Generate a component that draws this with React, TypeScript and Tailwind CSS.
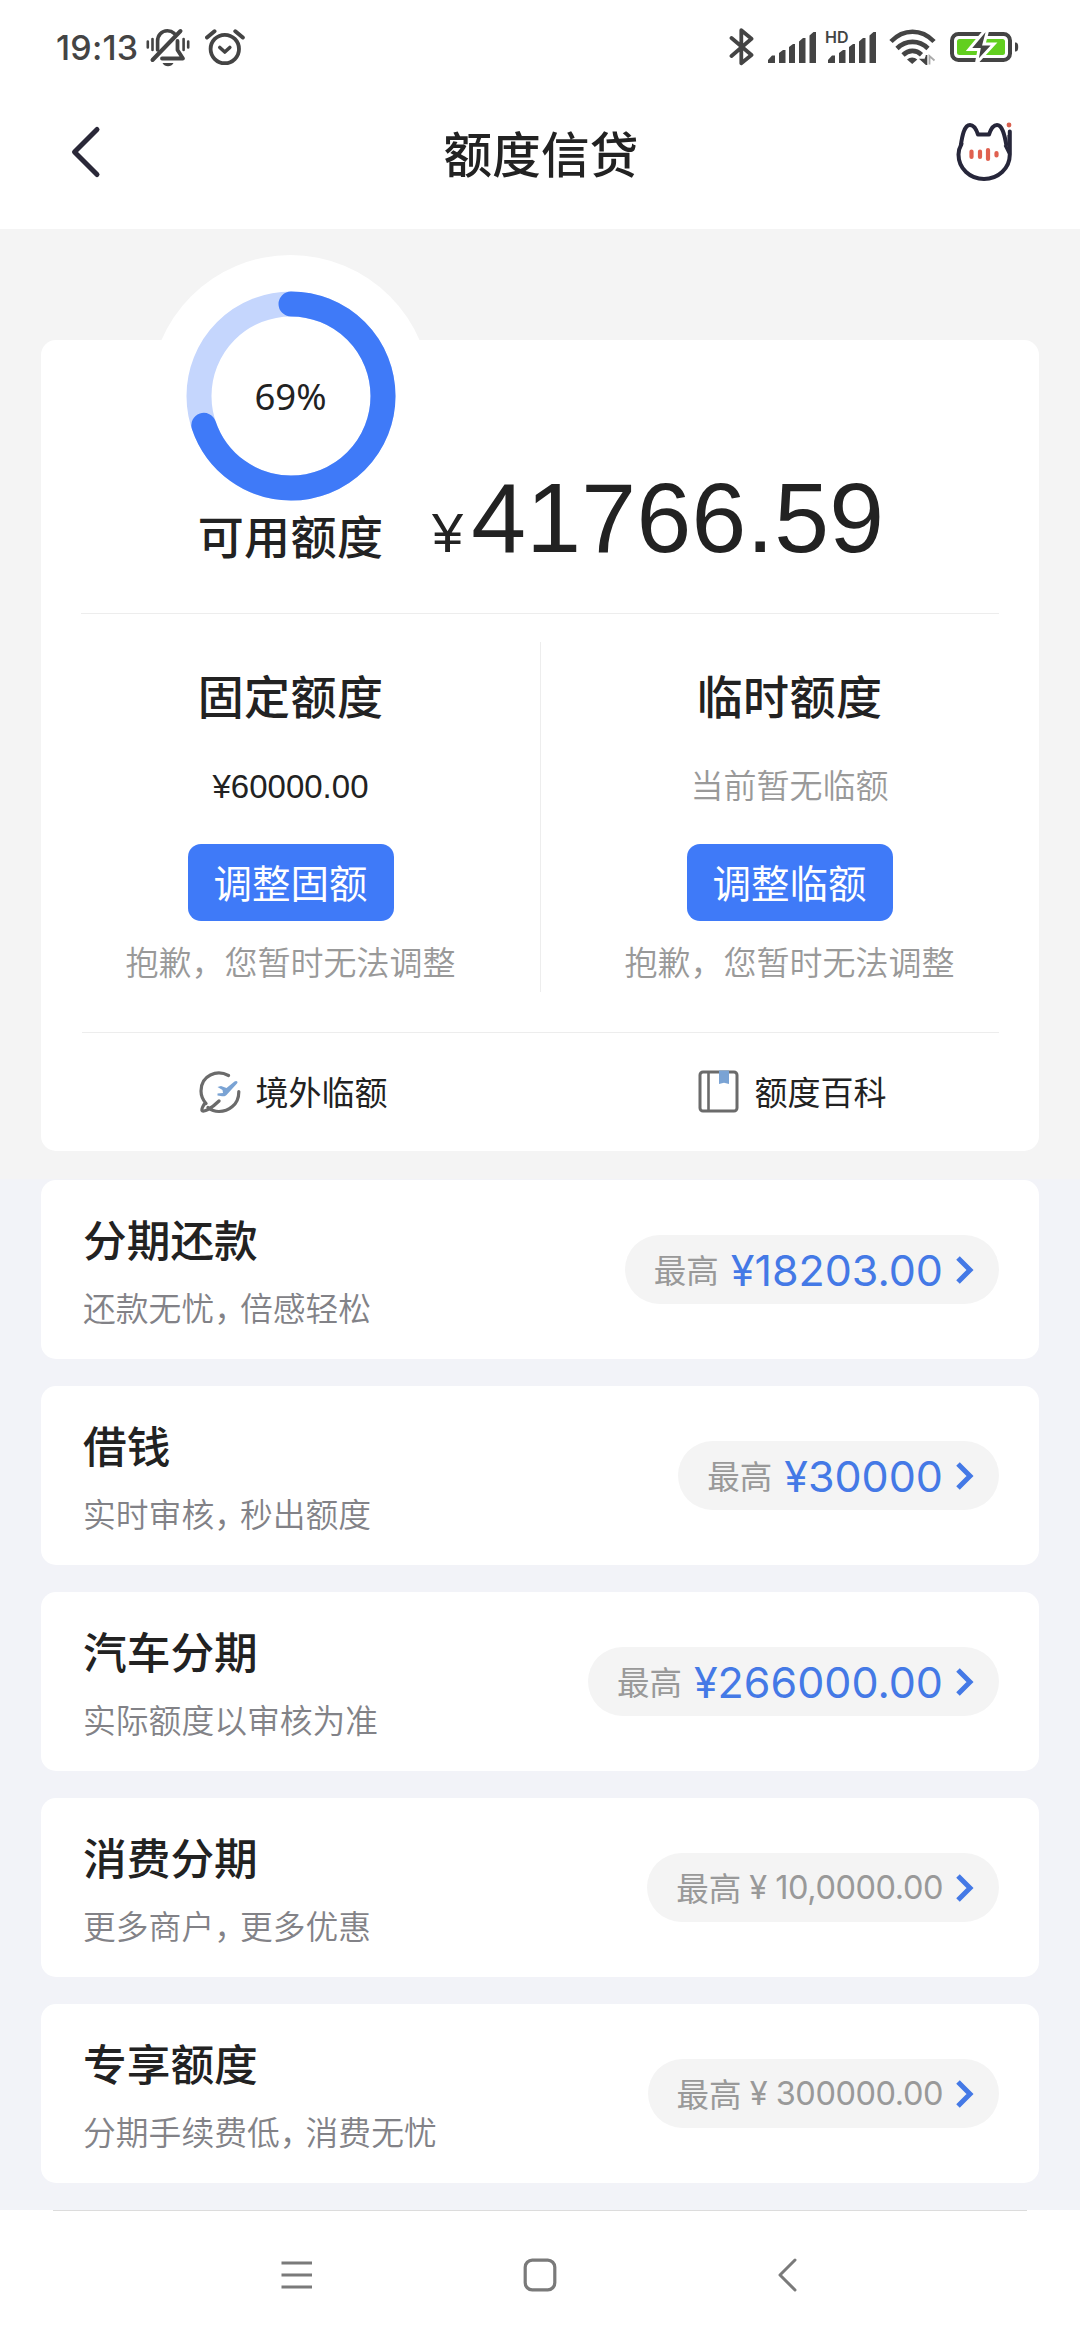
import type { ReactNode } from "react";
import { clsx } from "clsx";

const cjk = "font-['Noto_Sans_CJK_SC',sans-serif]";
const numeric = "font-['Inter','Noto_Sans_CJK_SC',sans-serif]";

type CreditProduct = {
  title: string;
  subtitle: string;
  amount: string;
  highlighted: boolean;
};

const PRODUCTS: CreditProduct[] = [
  { title: "分期还款", subtitle: "还款无忧，倍感轻松", amount: "18203.00", highlighted: true },
  { title: "借钱", subtitle: "实时审核，秒出额度", amount: "30000", highlighted: true },
  { title: "汽车分期", subtitle: "实际额度以审核为准", amount: "266000.00", highlighted: true },
  { title: "消费分期", subtitle: "更多商户，更多优惠", amount: "10,0000.00", highlighted: false },
  { title: "专享额度", subtitle: "分期手续费低，消费无忧", amount: "300000.00", highlighted: false },
];

function SilentBellIcon() {
  return (
    <svg width="46" height="40" viewBox="0 0 46 40" fill="none" stroke="#444" strokeLinecap="round" aria-hidden>
      <path d="M2.8 14.5v6M7.5 12v11M43.2 14.5v6M38.6 12v11" strokeWidth="2.6" />
      <path d="M12.6 23V14c0-5.6 4-10.2 9.8-10.2 2.8 0 5 .9 6.8 2.5" strokeWidth="3.6" />
      <path d="M35.5 4 7.5 33" strokeWidth="4" />
      <path d="M32.5 14v9l5.5 8.5H17" strokeWidth="3.8" strokeLinejoin="round" />
      <path d="M17.5 36h11c-1.2 2.2-3.2 3.3-5.5 3.3s-4.3-1.1-5.500-3.300z" fill="#444" stroke="none" />
    </svg>
  );
}

function AlarmIcon() {
  return (
    <svg width="40" height="38" viewBox="0 0 40 38" fill="none" stroke="#444" strokeLinecap="round" aria-hidden>
      <circle cx="19.8" cy="21" r="14.2" strokeWidth="3.8" />
      <path d="M2 9.5 9.5 3.3M37.8 9.5 30.3 3.3" strokeWidth="4" />
      <path d="m14.8 19.5 5 4.5 5-4.5" strokeWidth="3.6" strokeLinejoin="round" />
    </svg>
  );
}

function BluetoothIcon() {
  return (
    <svg width="26" height="40" viewBox="0 0 26 40" fill="none" stroke="#444" aria-hidden>
      <path
        d="M2.5 11 22.5 28 12.3 36.3V3.2L22.5 11.7 2.5 29"
        strokeWidth="3.8"
        strokeLinecap="round"
        strokeLinejoin="round"
      />
    </svg>
  );
}

function SignalIcon() {
  return (
    <svg width="48" height="31" viewBox="0 0 48 31" fill="#444" aria-hidden>
      <path d="M0 31v-3l4-4.5h3V31zM11 31V21l4-3h2.5v13zM21 31V15l4-3h2v19zM31 31V9.500L35 6h2.500v25zM41.500 31V3.500L45.500 0H48v31z" />
    </svg>
  );
}

function WifiIcon() {
  return (
    <svg width="47" height="36" viewBox="0 0 47 36" fill="none" stroke="#444" aria-hidden>
      <path d="M2 12.5C14.5-.5 32.5-.5 45 12.5" strokeWidth="4.6" />
      <path d="M8 19.5c9-8.8 22-8.8 31 0" strokeWidth="4.6" />
      <path d="M14 26c5.5-5.4 13-5.4 18.5-.3" strokeWidth="4.6" />
      <path d="M18 30.5c3-2.7 7.3-2.7 10.3 0l-5.1 4.5z" fill="#444" stroke="none" />
      <path d="M37.5 26v9.5L32 30.5h3" fill="#444" strokeWidth="1.6" />
      <path d="M40.5 35.5V27l5 4.5" strokeWidth="1.8" stroke="#aaa" />
    </svg>
  );
}

function BatteryIcon() {
  return (
    <svg width="70" height="34" viewBox="0 0 70 34" aria-hidden>
      <rect x="2" y="4" width="58" height="26" rx="6.5" fill="none" stroke="#444" strokeWidth="4" />
      <rect x="7" y="9" width="48" height="16" rx="2.5" fill="#62cf1f" />
      <path d="M65 12.5c2.2 0 3.2 1 3.2 4.5s-1 4.5-3.2 4.5z" fill="#444" />
      <path d="M34.5 1 19 19.5h10L26.5 33 44 14H34L37.5 1z" fill="#444" stroke="#fff" strokeWidth="3" />
    </svg>
  );
}

function CatServiceIcon() {
  return (
    <svg width="60" height="62" viewBox="0 0 60 62" fill="none" aria-hidden>
      <path
        d="M4.8 24.5C6 16 8 4 14 4c4.5 0 6.5 5 8 9.5h11C34.5 9 36.5 4 41 4c5 0 7.5 9 9.5 21"
        stroke="#26263a"
        strokeWidth="4"
        strokeLinejoin="round"
      />
      <path
        d="M5.5 23C3.5 26.5 2.5 30 2.5 33.5 2.5 47.5 14 58 28 58s25.8-10.5 25.8-24.5V10.5"
        stroke="#26263a"
        strokeWidth="4"
        strokeLinecap="round"
      />
      <path d="m49 24 4 8V14" stroke="#26263a" strokeWidth="3" />
      <circle cx="53" cy="4" r="2.4" fill="#d9604f" />
      <path
        d="M15.5 30.5v5.5M24 30.5v5.5M32 29v9M40.5 32v2.5"
        stroke="#e0604f"
        strokeWidth="4.2"
        strokeLinecap="round"
      />
    </svg>
  );
}

function StatusBar() {
  return (
    <div className="flex h-[94px] items-center justify-between pr-[60px] pl-[56px]">
      <div className="flex items-center">
        <span
          className={clsx(numeric, "w-[89px] pt-px text-[34px] leading-none font-[450] tracking-[0.2px] text-[#444]")}
        >
          19:13
        </span>
        <SilentBellIcon />
        <span className="w-[14px]" />
        <AlarmIcon />
      </div>
      <div className="flex items-center">
        <BluetoothIcon />
        <span className="w-[13px]" />
        <SignalIcon />
        <div className="relative ml-[12px]">
          <SignalIcon />
          <span className="absolute -top-[2px] -left-[3px] bg-white pr-px font-['Inter',sans-serif] text-[16px] leading-[14px] font-semibold text-[#444]">
            HD
          </span>
        </div>
        <span className="w-[13px]" />
        <WifiIcon />
        <span className="w-[14px]" />
        <BatteryIcon />
      </div>
    </div>
  );
}

function TitleBar() {
  return (
    <header className="flex h-[135px] items-center justify-between pr-[64px] pb-[19px] pl-[66px]">
      <button type="button" aria-label="返回" className="flex w-[60px] items-center">
        <svg width="40" height="54" viewBox="0 0 40 54" fill="none" aria-hidden>
          <path
            d="M31 4.5 8.5 27 31 49.5"
            stroke="#2a2838"
            strokeWidth="5"
            strokeLinecap="round"
            strokeLinejoin="round"
          />
        </svg>
      </button>
      <h1 className={clsx(cjk, "text-[48.5px] leading-none font-medium tracking-[0.3px] text-[#222]")}>额度信贷</h1>
      <button type="button" aria-label="客服">
        <CatServiceIcon />
      </button>
    </header>
  );
}

function UsageRing({ percent }: { percent: number }) {
  const radius = 92;
  const length = 2 * Math.PI * radius;
  return (
    <div className="relative flex size-[281px] items-center justify-center rounded-full bg-white">
      <svg width="210" height="210" viewBox="0 0 210 210" fill="none" className="-rotate-90" aria-hidden>
        <circle cx="105" cy="105" r={radius} stroke="#c5d6fd" strokeWidth="25" />
        <circle
          cx="105"
          cy="105"
          r={radius}
          stroke="#3f7af8"
          strokeWidth="25"
          strokeLinecap="round"
          strokeDasharray={`${(length * percent) / 100} ${length}`}
        />
      </svg>
      <span className="absolute pt-[2px] font-['Noto_Sans',sans-serif] text-[36.5px] leading-none text-[#222]">
        {Math.floor(percent)}%
      </span>
    </div>
  );
}

function QuotaColumn({ title, value, action }: { title: string; value: ReactNode; action: string }) {
  return (
    <div className={clsx(cjk, "flex flex-col items-center pt-[57px]")}>
      <h2 className="text-[46px] leading-none font-medium tracking-[0.4px] text-[#222]">{title}</h2>
      <div className="mt-[49px] h-[40px]">{value}</div>
      <button
        type="button"
        className="mt-[38px] flex h-[77px] w-[206px] items-center justify-center rounded-[13px] bg-[#3f7af8] pb-[3px] text-[38.5px] leading-none text-white"
      >
        {action}
      </button>
      <p className="mt-[24px] text-[33px] leading-none font-[350] text-[#999]">抱歉，您暂时无法调整</p>
    </div>
  );
}

function QuickLink({ icon, label }: { icon: ReactNode; label: string }) {
  return (
    <div className="flex items-center justify-center pl-[5px]">
      {icon}
      <span className={clsx(cjk, "ml-[15px] text-[33px] leading-none text-[#222]")}>{label}</span>
    </div>
  );
}

function OverseasIcon() {
  return (
    <svg width="42" height="44" viewBox="0 0 42 44" fill="none" aria-hidden>
      <path
        d="M29.5 5.5C18-.5 2 5 2 21c0 5.5 2 9 5 12.5M39.8 21.5C40 35 29 41.5 20 41.5c-4.5 0-8-1.5-11-4M6 33c-2 3-3.5 6-3 7.5 1 2 9-1.5 17-9.5"
        stroke="#6b6b6b"
        strokeWidth="3.2"
        strokeLinecap="round"
      />
      <path
        d="m18.5 17 3.5-1 5.5 2 8-6.5c2-1.5 4 .3 2.5 2L27.5 25c-1.5 1.5-3 1.8-9 .5v-2l5.5-.5-.5-3z"
        fill="#7aa3d4"
      />
    </svg>
  );
}

function WikiIcon() {
  return (
    <svg width="42" height="44" viewBox="0 0 42 44" fill="none" aria-hidden>
      <rect x="2" y="2" width="37" height="39" rx="3" stroke="#6b6b6b" strokeWidth="3" />
      <path d="M10.5 2v39" stroke="#6b6b6b" strokeWidth="2.6" />
      <path d="M21 .5h10V14l-5-1.2L21 14z" fill="#7aa3d4" />
    </svg>
  );
}

function QuotaCard() {
  return (
    <section className="h-[811px] rounded-[15px] bg-white">
      <div className="mx-[40px] flex h-[274px] items-start border-b border-[#ededed] pl-[69px]">
        <div className="-mt-[85px] flex w-[281px] flex-col items-center">
          <UsageRing percent={69.7} />
          <span
            className={clsx(cjk, "relative -mt-[25px] text-[46px] leading-none font-medium tracking-[0.4px] text-[#222]")}
          >
            可用额度
          </span>
        </div>
        <p className="mt-[129px] flex items-baseline font-['Liberation_Sans',sans-serif] leading-none text-[#222]">
          <span className="mr-[8px] ml-px text-[56px]">¥</span>
          <span className="text-[98.5px] tracking-[0.3px]">41766.59</span>
        </p>
      </div>
      <div className="relative grid h-[418px] grid-cols-2">
        <QuotaColumn
          title="固定额度"
          action="调整固额"
          value={
            <p className="pt-[4px] font-['Liberation_Sans',sans-serif] text-[33px] leading-none text-[#222]">
              ¥60000.00
            </p>
          }
        />
        <QuotaColumn
          title="临时额度"
          action="调整临额"
          value={<p className="pt-[2px] text-[33px] leading-none font-[350] text-[#999]">当前暂无临额</p>}
        />
        <span className="absolute top-[28px] left-[499px] h-[350px] w-px bg-[#ededed]" />
      </div>
      <div className="mr-[40px] ml-[41px] h-px bg-[#ededed]" />
      <div className="grid h-[117px] grid-cols-2">
        <QuickLink icon={<OverseasIcon />} label="境外临额" />
        <QuickLink icon={<WikiIcon />} label="额度百科" />
      </div>
    </section>
  );
}

// 全角逗号收窄，避免副标题中间空隙过大
function Subtitle({ text }: { text: string }) {
  const [head, tail] = text.split("，");
  return (
    <p className="mt-[30px] text-[32.8px] leading-[33px] font-[350] text-[#828287]">
      {head}
      {tail ? <span className="tracking-[-7px]">，</span> : null}
      {tail}
    </p>
  );
}

function ProductCard({ item }: { item: CreditProduct }) {
  return (
    <li className="flex h-[179px] shrink-0 items-center justify-between rounded-[15px] bg-white pr-[40px] pl-[42px]">
      <div className={cjk}>
        <h3 className="text-[43.7px] leading-[44px] font-medium text-[#222]">{item.title}</h3>
        <Subtitle text={item.subtitle} />
      </div>
      <div className="flex h-[69px] items-center rounded-full bg-[#f4f4f4] pr-[24px] pl-[29px]">
        <span className={clsx(cjk, "pb-px text-[32.5px] leading-none text-[#999]")}>最高</span>
        {item.highlighted ? (
          <span className={clsx(numeric, "ml-[12px] pt-px text-[43px] leading-none text-[#4479e6]")}>
            ¥{item.amount}
          </span>
        ) : (
          <span
            className={clsx(numeric, "ml-[8px] pt-px text-[32.5px] leading-none tracking-[-0.45px] text-[#999]")}
          >
            ¥ {item.amount}
          </span>
        )}
        <svg width="20" height="30" viewBox="0 0 20 30" fill="none" className="ml-[12px]" aria-hidden>
          <path d="m3 3 12 12L3 27" stroke="#4479e6" strokeWidth="5" />
        </svg>
      </div>
    </li>
  );
}

function SystemNav() {
  return (
    <nav className="h-[130px] shrink-0 bg-white">
      <div className="mx-[53px] h-px bg-[#dcdcdc]" />
      <div className="grid h-[128px] grid-cols-[34px_34px_34px] items-center justify-center gap-[208px]">
        <svg width="32" height="34" viewBox="0 0 32 34" stroke="#7a7a7a" strokeWidth="3.2" aria-hidden>
          <path d="M.5 5h30.5M.5 17h30.5M.5 29h30.5" />
        </svg>
        <svg width="34" height="34" viewBox="0 0 34 34" fill="none" stroke="#7a7a7a" strokeWidth="3.2" aria-hidden>
          <rect x="2.2" y="2.2" width="29.6" height="29.6" rx="7" />
        </svg>
        <svg width="34" height="34" viewBox="0 0 34 34" fill="none" stroke="#7a7a7a" strokeWidth="3" aria-hidden>
          <path d="M30 2 15 17l15 15" strokeLinecap="round" strokeLinejoin="round" />
        </svg>
      </div>
    </nav>
  );
}

export default function App() {
  return (
    <div className="flex h-[2340px] w-[1080px] flex-col overflow-hidden bg-[#f2f3f8]">
      <div className="h-[229px] shrink-0 bg-white">
        <StatusBar />
        <TitleBar />
      </div>
      <div className="h-[950px] shrink-0 bg-[#f4f4f4] px-[41px] pt-[111px]">
        <QuotaCard />
      </div>
      <ul className="flex min-h-0 flex-1 flex-col gap-[27px] px-[41px] pt-px">
        {PRODUCTS.map((item) => (
          <ProductCard key={item.title} item={item} />
        ))}
      </ul>
      <SystemNav />
    </div>
  );
}
